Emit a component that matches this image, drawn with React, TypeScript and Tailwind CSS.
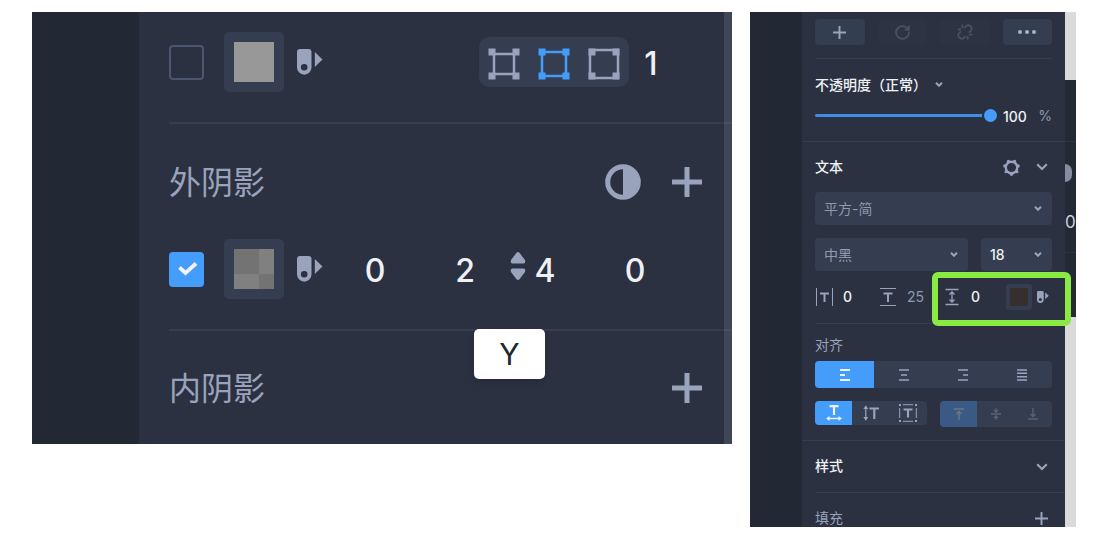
import type { ReactNode } from "react";
import { RotateCw, Unlink } from "lucide-react";

function Dropper({ className }: { className: string }) {
  return (
    <svg viewBox="0 0 26 26" className={className} fill="#99a3bc" aria-hidden="true">
      <path
        fillRule="evenodd"
        d="M3 0H11.5Q14.5 0 14.5 3V18.5A7.2 7.2 0 0 1 0 18.5V3Q0 0 3 0ZM7.2 15A3.3 3.3 0 1 0 7.2 21.6A3.3 3.3 0 1 0 7.2 15Z"
      />
      <path d="M17.8 3L25.5 10.5L17.8 18Z" />
    </svg>
  );
}

function Plus({ className, width }: { className: string; width: number }) {
  return (
    <svg viewBox="0 0 30 30" className={className} stroke="#99a3bc" strokeWidth={width} aria-hidden="true">
      <path d="M15 0V30M0 15H30" />
    </svg>
  );
}

function Chevron({ small = false }: { small?: boolean }) {
  return (
    <svg
      viewBox="0 0 12 8"
      className={small ? "h-[5px] w-[8px]" : "h-[8px] w-[12px]"}
      fill="none"
      stroke="#99a3bc"
      strokeWidth={small ? 3.2 : 2.2}
      aria-hidden="true"
    >
      <path d="M1.2 1.2L6 6L10.8 1.2" />
    </svg>
  );
}

function BorderIcon({ inset, color }: { inset: number; color: string }) {
  const size = 32 - inset * 2;
  return (
    <svg viewBox="0 0 32 32" className="size-8" aria-hidden="true">
      <rect x={inset} y={inset} width={size} height={size} fill="none" stroke={color} strokeWidth="2.5" />
      <path d="M.5 .5h7v7h-7zM24.5 .5h7v7h-7zM.5 24.5h7v7h-7zM24.5 24.5h7v7h-7z" fill={color} />
    </svg>
  );
}

function Check({ label, checked }: { label: string; checked?: boolean }) {
  return (
    <span className="relative block size-[35px]">
      <input
        type="checkbox"
        aria-label={label}
        defaultChecked={checked}
        className="peer block size-[35px] appearance-none rounded-[4px] border-2 border-[#4a5672] checked:border-[#459dfb] checked:bg-[#459dfb]"
      />
      <svg
        viewBox="0 0 35 35"
        className="pointer-events-none absolute inset-0 hidden size-full peer-checked:block"
        fill="none"
        stroke="#f2f3f7"
        strokeWidth="3.8"
        aria-hidden="true"
      >
        <path d="M10.5 15.500L16.500 21L27 11.500" />
      </svg>
    </span>
  );
}

function BigField({ label, value }: { label: string; value: string }) {
  return (
    <input
      aria-label={label}
      defaultValue={value}
      className="w-full min-w-0 bg-transparent pt-1 text-center text-[32px] leading-[40px] font-medium text-[#eff0f4] outline-none"
    />
  );
}

function ShadowPanel() {
  return (
    <section className="relative flex min-w-0 flex-[700] self-start bg-[#2b3141]">
      <div className="w-[107px] flex-none bg-[#222834]" />
      <div className="min-w-0 flex-1 pl-[30px]">
        <div className="flex items-center border-b-2 border-[#353d50] pt-5 pr-[59px] pb-[30px]">
          <Check label="边框" />
          <button aria-label="边框颜色" className="ml-5 flex size-[60px] items-center justify-center rounded-[5px] bg-[#353d50]">
            <span className="size-10 bg-[#989898]" />
          </button>
          <button aria-label="取色" className="ml-[13px]">
            <Dropper className="size-[26px]" />
          </button>
          <div className="ml-auto flex h-[50px] rounded-[10px] bg-[#353d50] pt-[3px]">
            <button aria-label="内部" className="flex w-[50px] items-center justify-center">
              <BorderIcon inset={6} color="#99a3bc" />
            </button>
            <button aria-label="居中" className="flex w-[50px] items-center justify-center">
              <BorderIcon inset={4} color="#459dfb" />
            </button>
            <button aria-label="外部" className="flex w-[50px] items-center justify-center">
              <BorderIcon inset={2} color="#99a3bc" />
            </button>
          </div>
          <div className="w-11">
            <BigField label="边框宽度" value="1" />
          </div>
        </div>

        <div className="border-b-2 border-[#353d50] pb-[30px]">
          <div className="flex h-[115px] items-center pr-[30px]">
            <h2 className="pt-[3px] text-[32px] leading-10 text-[#99a3bc]">外阴影</h2>
            <button aria-label="混合" className="ml-auto">
              <svg viewBox="0 0 36 36" className="size-9" aria-hidden="true">
                <circle cx="18" cy="18" r="15.3" fill="none" stroke="#99a3bc" strokeWidth="5" />
                <path d="M18 2a16 16 0 0 1 0 32z" fill="#99a3bc" />
              </svg>
            </button>
            <button aria-label="添加外阴影" className="ml-[31px]">
              <Plus className="size-[30px]" width={5} />
            </button>
          </div>
          <div className="flex items-center pr-[42px]">
            <Check label="外阴影" checked />
            <button aria-label="阴影颜色" className="ml-5 flex size-[60px] items-center justify-center rounded-[5px] bg-[#353d50]">
              <span className="grid size-10 grid-cols-[25px_15px] grid-rows-[25px_15px]">
                <span className="bg-[#737373]" />
                <span className="bg-[#808080]" />
                <span className="bg-[#808080]" />
                <span className="bg-[#737373]" />
              </span>
            </button>
            <button aria-label="取色" className="ml-[13px]">
              <Dropper className="size-[26px]" />
            </button>
            <div className="ml-[7px] grid flex-1 grid-cols-[90fr_90fr_70fr_110fr]">
              <BigField label="X" value="0" />
              <div className="relative">
                <BigField label="Y" value="2" />
                <span
                  role="tooltip"
                  className="absolute top-[82px] left-[54px] z-10 flex h-[50px] w-[71px] items-center justify-center rounded-[5px] bg-white text-[30px] text-[#222834] shadow-md"
                >
                  Y
                </span>
              </div>
              <div className="relative">
                <BigField label="模糊" value="4" />
                <svg viewBox="0 0 16 28" className="absolute top-[5px] left-0 h-7 w-4" fill="#99a3bc" aria-hidden="true">
                  <path d="M6.500 .8Q8-.8 9.500 .8L15 8Q16 11.500 13.500 11.500H2.500Q0 11.500 1 8ZM6.500 27.200Q8 28.800 9.500 27.200L15 20Q16 16.500 13.500 16.500H2.500Q0 16.500 1 20Z" />
                </svg>
              </div>
              <BigField label="扩展" value="0" />
            </div>
          </div>
        </div>

        <div className="flex h-[113px] items-center pr-[30px]">
          <h2 className="pt-[3px] text-[32px] leading-10 text-[#99a3bc]">内阴影</h2>
          <button aria-label="添加内阴影" className="ml-auto">
            <Plus className="size-[30px]" width={5} />
          </button>
        </div>
      </div>
      <div className="pointer-events-none absolute inset-y-0 right-0 w-2 bg-[#9a9ab0]/20" />
    </section>
  );
}

function Select({ label, value, bright = false }: { label: string; value: string; bright?: boolean }) {
  return (
    <div className="relative">
      <select
        aria-label={label}
        className={
          "block h-[33px] w-full appearance-none rounded-[4px] bg-[#353d50] pl-[9px] text-[14px] outline-none " +
          (bright ? "font-medium text-[#f0f1f5]" : "text-[#8f99b2]")
        }
      >
        <option>{value}</option>
      </select>
      <span className="pointer-events-none absolute inset-y-0 right-[10px] flex items-center">
        <Chevron small />
      </span>
    </div>
  );
}

function SmallField({ label, value, dim = false }: { label: string; value: string; dim?: boolean }) {
  return (
    <input
      aria-label={label}
      defaultValue={value}
      className={
        "w-7 bg-transparent text-[14px] leading-5 outline-none " +
        (dim ? "text-[#8f99b2]" : "font-medium text-[#f0f1f5]")
      }
    />
  );
}

function Seg({ label, active = false, children }: { label: string; active?: boolean; children: ReactNode }) {
  return (
    <button
      aria-label={label}
      className={"flex flex-1 items-center justify-center " + (active ? "bg-[#459dfb] text-[#eef4fc]" : "text-[#99a3bc]")}
    >
      {children}
    </button>
  );
}

function Stroke({ d, className, box, width = 1 }: { d: string; className: string; box: string; width?: number }) {
  return (
    <svg viewBox={box} className={className} fill="none" stroke="currentColor" strokeWidth={width} aria-hidden="true">
      <path d={d} />
    </svg>
  );
}

function TextPanel() {
  return (
    <section className="flex h-full min-w-0 flex-[326] overflow-hidden bg-[#2b3141]">
      <div className="w-[52px] flex-none bg-[#222834]" />
      <div className="min-w-0 flex-1 text-[14px] text-[#99a3bc]">
        <div className="px-[13px] pt-[7px]">
          <div className="grid grid-cols-4 gap-[13px] border-b border-[#353d50] pb-[13px]">
            <button aria-label="添加" className="flex h-[26px] items-center justify-center rounded-[4px] bg-[#353d50]">
              <Plus className="size-[13px]" width={4.5} />
            </button>
            <button aria-label="旋转" disabled className="flex h-[26px] items-center justify-center rounded-[4px] bg-[#2e3344] text-[#4b5165]">
              <RotateCw size={17} strokeWidth={2.6} />
            </button>
            <button aria-label="断开" disabled className="flex h-[26px] items-center justify-center rounded-[4px] bg-[#2e3344] text-[#4b5165]">
              <Unlink size={16} strokeWidth={2.6} />
            </button>
            <button aria-label="更多" className="flex h-[26px] items-center justify-center rounded-[4px] bg-[#353d50]">
              <svg viewBox="0 0 18 4" className="h-1 w-[18px]" fill="#a9b1c6" aria-hidden="true">
                <circle cx="2" cy="2" r="2" />
                <circle cx="9" cy="2" r="2" />
                <circle cx="16" cy="2" r="2" />
              </svg>
            </button>
          </div>
          <button className="mt-[11px] mb-px flex h-7 items-center font-medium text-[#f0f1f5]">
            不透明度（正常）
            <span className="ml-2">
              <Chevron small />
            </span>
          </button>
        </div>
        <div className="border-b border-[#353d50] px-[13px] pb-[10px]">
          <div className="flex h-8 items-center">
            <input
              type="range"
              aria-label="不透明度"
              defaultValue={100}
              className="h-4 min-w-0 flex-1 appearance-none bg-transparent [&::-webkit-slider-runnable-track]:h-[3px] [&::-webkit-slider-runnable-track]:rounded-full [&::-webkit-slider-runnable-track]:bg-[#3f8ee6] [&::-webkit-slider-thumb]:-mt-[5px] [&::-webkit-slider-thumb]:size-[13px] [&::-webkit-slider-thumb]:appearance-none [&::-webkit-slider-thumb]:rounded-full [&::-webkit-slider-thumb]:bg-[#459dfb] [&::-webkit-slider-thumb]:shadow-[0_0_0_2px_#2b3141]"
            />
            <input
              aria-label="不透明度数值"
              defaultValue="100"
              className="ml-[6px] w-7 bg-transparent pt-[2px] text-[14px] font-medium text-[#f0f1f5] outline-none"
            />
            <span className="w-[21px] text-right text-[#8f99b2]">%</span>
          </div>
        </div>

        <div className="px-[13px] pb-[13px]">
          <div className="flex h-[50px] items-center pr-[4px]">
            <h2 className="pb-[2px] font-medium text-[#f0f1f5]">文本</h2>
            <button aria-label="文本设置" className="ml-auto">
              <svg viewBox="0 0 16 16" className="size-[17px]" fill="#99a3bc" aria-hidden="true">
                <circle cx="8" cy="8" r="5.400" fill="none" stroke="#99a3bc" strokeWidth="2.200" />
                <circle cx="8" cy="14.400" r="1.500" />
                <circle cx="2.900" cy="12" r="1.500" />
                <circle cx="13.100" cy="12" r="1.500" />
                <circle cx="1.700" cy="6.500" r="1.500" />
                <circle cx="14.300" cy="6.500" r="1.500" />
                <circle cx="5.140" cy="2.150" r="1.500" />
                <circle cx="10.860" cy="2.150" r="1.500" />
              </svg>
            </button>
            <button aria-label="折叠文本" className="ml-4">
              <Chevron />
            </button>
          </div>
          <div className="grid gap-[13px]">
            <Select label="字体" value="平方-简" />
            <div className="grid grid-cols-[153fr_71fr] gap-[13px]">
              <Select label="字重" value="中黑" />
              <Select label="字号" value="18" bright />
            </div>
            <div className="grid grid-cols-[65px_65px_1fr] border-b border-[#353d50] pb-[13px]">
              <div className="flex h-[26px] items-center">
                <svg viewBox="0 0 19 18" className="mr-[9px] h-[18px] w-[19px] flex-none" fill="none" stroke="currentColor" aria-hidden="true">
                  <path d="M1.500 0V18M17.500 0V18" />
                  <path d="M5 5.500H14M9.500 5.500V14" strokeWidth="2" />
                </svg>
                <SmallField label="字距" value="0" />
              </div>
              <div className="flex h-[26px] items-center">
                <svg viewBox="0 0 16 18" className="mr-[11px] h-[18px] w-4 flex-none" fill="none" stroke="currentColor" aria-hidden="true">
                  <path d="M0 .5H16M0 17.500H16" />
                  <path d="M3.500 5.500H12.500M8 5.500V14" strokeWidth="2" />
                </svg>
                <SmallField label="行高" value="25" dim />
              </div>
              <div className="relative flex h-[26px] items-center">
                <Stroke
                  className="mr-3 h-[18px] w-[14px] flex-none"
                  box="0 0 14 18"
                  width={1.3}
                  d="M.5 1.500H13.500M.5 16.500H13.500M7 4V14M4.500 6.500L7 4L9.500 6.500M4.500 11.500L7 14L9.500 11.500"
                />
                <SmallField label="段落间距" value="0" />
                <button aria-label="文本颜色" className="ml-auto flex size-[26px] items-center justify-center rounded-[3px] bg-[#353d50]">
                  <span className="size-[18px] bg-[#352f2e]" />
                </button>
                <button aria-label="取色" className="mr-[3px] ml-[5px]">
                  <Dropper className="size-[12px]" />
                </button>
                <span className="pointer-events-none absolute -top-[12px] -right-[19px] -bottom-[16px] -left-[13px] z-10 rounded-[6px] border-6 border-[#8ae943]" />
              </div>
            </div>
          </div>
          <h3 className="flex h-[37px] items-center pt-1">对齐</h3>
          <div className="flex h-[27px] overflow-hidden rounded-[4px] bg-[#353d50]">
            <Seg label="左对齐" active>
              <Stroke className="h-3 w-[10px]" box="0 0 10 12" width={2} d="M0 1H10M0 6H5M0 11H10" />
            </Seg>
            <Seg label="居中对齐">
              <Stroke className="h-3 w-[10px]" box="0 0 10 12" width={1.7} d="M0 1H10M2 6H8M0 11H10" />
            </Seg>
            <Seg label="右对齐">
              <Stroke className="h-3 w-[10px]" box="0 0 10 12" width={1.7} d="M0 1H10M5 6H10M0 11H10" />
            </Seg>
            <Seg label="两端对齐">
              <Stroke className="h-3 w-[10px]" box="0 0 10 12" width={1.4} d="M0 1H10M0 4.300H10M0 7.700H10M0 11H10" />
            </Seg>
          </div>
          <div className="mt-[13px] grid grid-cols-2 items-start gap-[13px]">
            <div className="flex h-6 overflow-hidden rounded-[4px] bg-[#353d50]">
              <Seg label="自动宽度" active>
                <svg viewBox="0 0 16 16" className="size-4" stroke="currentColor" fill="none" aria-hidden="true">
                  <path d="M3.500 1.200H12.500M8 1.200V10" strokeWidth="2.200" />
                  <path d="M2 13.500H14" strokeWidth="1.300" />
                  <path d="M0 13.500L3.500 11V16ZM16 13.500L12.500 11V16Z" fill="currentColor" stroke="none" />
                </svg>
              </Seg>
              <Seg label="自动高度">
                <svg viewBox="0 0 16 16" className="size-4" stroke="currentColor" fill="none" aria-hidden="true">
                  <path d="M6.500 3.500H16M11.300 3.500V14" strokeWidth="2.200" />
                  <path d="M2.800 2V14" strokeWidth="1.200" />
                  <path d="M2.800 .2L.3 4H5.300ZM2.800 15.800L.3 12H5.300Z" fill="currentColor" stroke="none" />
                </svg>
              </Seg>
              <Seg label="固定尺寸">
                <svg viewBox="0 0 18 18" className="size-[18px]" stroke="currentColor" fill="none" aria-hidden="true">
                  <path d="M4.500 5.500H13.500M9 5.500V13.500" strokeWidth="2.200" />
                  <path d="M4 .7H14M4 17.300H14M.7 4V14M17.300 4V14" />
                  <path d="M0 0h2v2h-2zM16 0h2v2h-2zM0 16h2v2h-2zM16 16h2v2h-2z" fill="currentColor" stroke="none" />
                </svg>
              </Seg>
            </div>
            <div className="flex h-[26px] overflow-hidden rounded-[4px] bg-[#353d50] text-[#596175]">
              <button aria-label="顶部对齐" disabled className="flex flex-1 items-center justify-center bg-[#3a5a85] text-[#717684]">
                <Stroke className="h-3 w-[10px]" box="0 0 10 12" width={1.4} d="M0 1H10M5 12V3.500M2.500 6L5 3.500L7.500 6" />
              </button>
              <button aria-label="垂直居中" disabled className="flex flex-1 items-center justify-center">
                <Stroke className="h-3 w-[10px]" box="0 0 10 12" width={1.3} d="M0 6H10M5 0V4M3 2L5 4L7 2M5 12V8M3 10L5 8L7 10" />
              </button>
              <button aria-label="底部对齐" disabled className="flex flex-1 items-center justify-center">
                <Stroke className="h-3 w-[10px]" box="0 0 10 12" width={1.4} d="M0 11H10M5 0V8.500M2.500 6L5 8.500L7.500 6" />
              </button>
            </div>
          </div>
        </div>

        <div className="border-t border-[#353d50] pl-[13px]">
          <div className="flex h-[51px] items-center pr-[17px]">
            <h2 className="pb-[2px] font-medium text-[#f0f1f5]">样式</h2>
            <button aria-label="折叠样式" className="ml-auto">
              <Chevron />
            </button>
          </div>
          <div className="flex h-[51px] items-center border-t border-[#353d50] pr-[17px]">
            <h2 className="pb-[2px]">填充</h2>
            <button aria-label="添加填充" className="ml-auto">
              <Plus className="size-[13px]" width={4.5} />
            </button>
          </div>
        </div>
      </div>

      <div className="flex w-[11px] flex-none flex-col overflow-hidden bg-[#dadada]">
        <div className="mt-[68px] h-[237px] bg-[#242936]">
          <div className="h-[61px]" />
          <div className="flex h-[62px] items-center border-t border-[#2e3444]">
            <span className="h-[18px] w-[7px] rounded-r-full bg-[#868da0]" />
          </div>
          <div className="flex h-[38px] items-center text-[17px] leading-none text-[#cfcfd2]">0</div>
          <div className="h-3 border-b border-[#2e3444]" />
        </div>
      </div>
    </section>
  );
}

export default function App() {
  return (
    <main className="flex h-screen min-h-[534px] gap-[18px] bg-white pt-3 pr-[34px] pb-[7px] pl-8 font-['Inter','Noto_Sans_CJK_SC',sans-serif]">
      <ShadowPanel />
      <TextPanel />
    </main>
  );
}
